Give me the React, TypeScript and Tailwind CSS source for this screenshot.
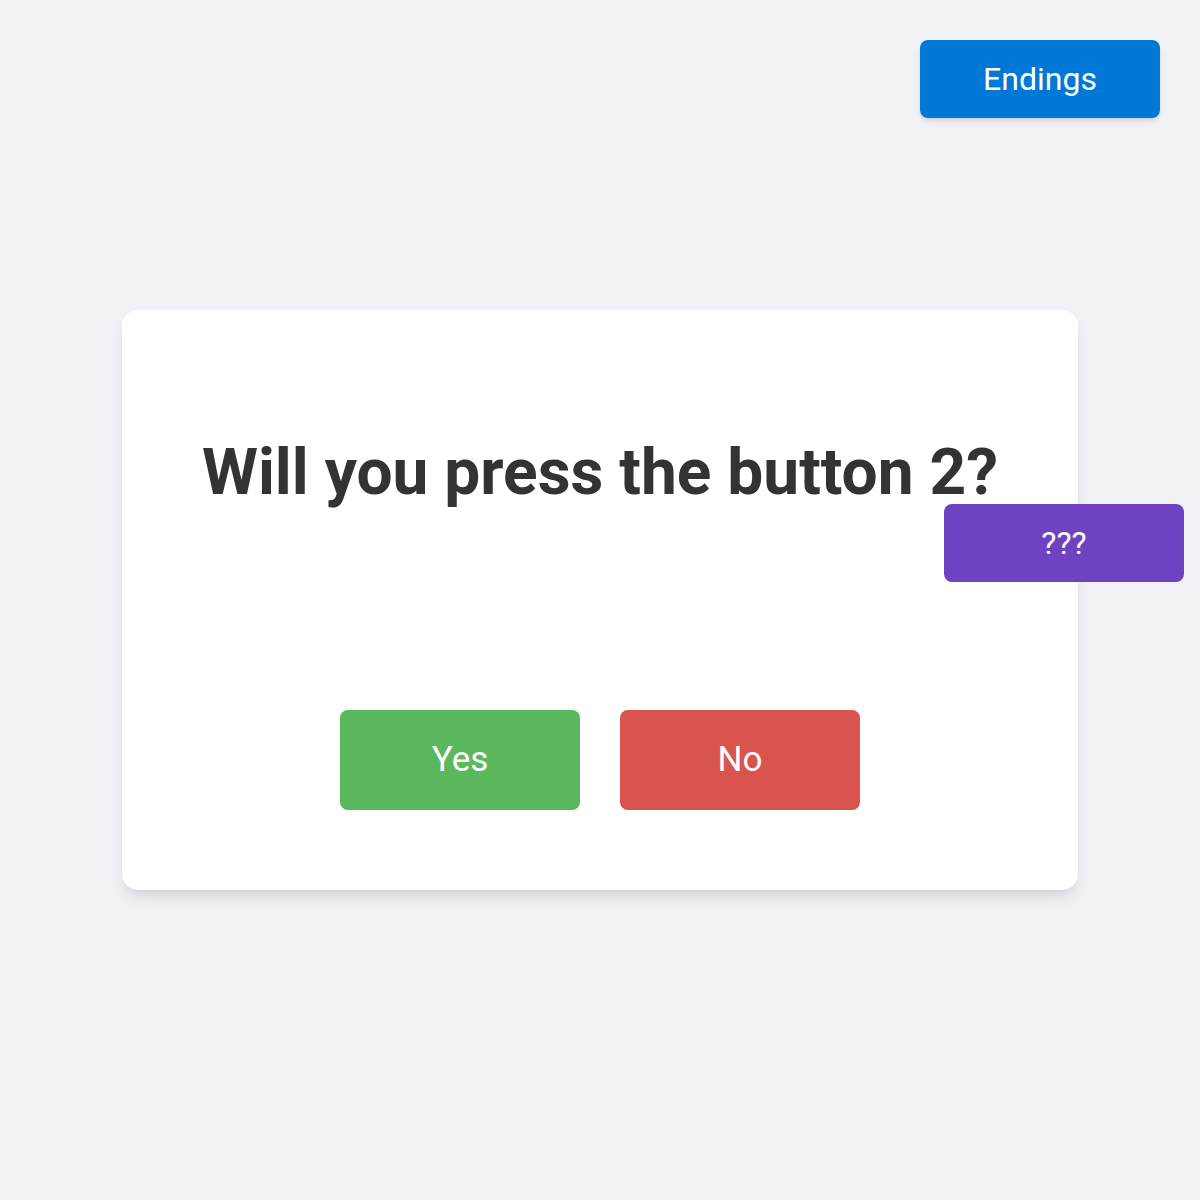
export default function App() {
    return (
        <div className="relative w-full h-[1200px] bg-[#f0f2f5] flex items-center justify-center" style={{ fontFamily: "Roboto, 'Liberation Sans', sans-serif" }}>

            <button className="absolute top-10 right-10 w-[240px] h-[78px] rounded-lg bg-[#0078d7] text-white text-[32px] shadow-md">
                Endings
            </button>

            <div className="w-[956px] h-[580px] bg-white rounded-2xl shadow-lg flex flex-col items-center">

                <h1 className="mt-[131px] text-[64px] leading-none font-bold text-[#333333]">
                    Will you press the button 2?
                </h1>

                <div className="mt-auto mb-20 flex gap-10">
                    <button className="w-[240px] h-[100px] rounded-lg bg-[#5cb85c] text-white text-[35px]">
                        Yes
                    </button>
                    <button className="w-[240px] h-[100px] rounded-lg bg-[#d9534f] text-white text-[35px]">
                        No
                    </button>
                </div>

            </div>

            <button className="absolute left-[944px] top-[504px] w-[240px] h-[78px] rounded-lg bg-[#6f42c1] text-white text-[32px]">
                ???
            </button>

        </div>
    );
}
